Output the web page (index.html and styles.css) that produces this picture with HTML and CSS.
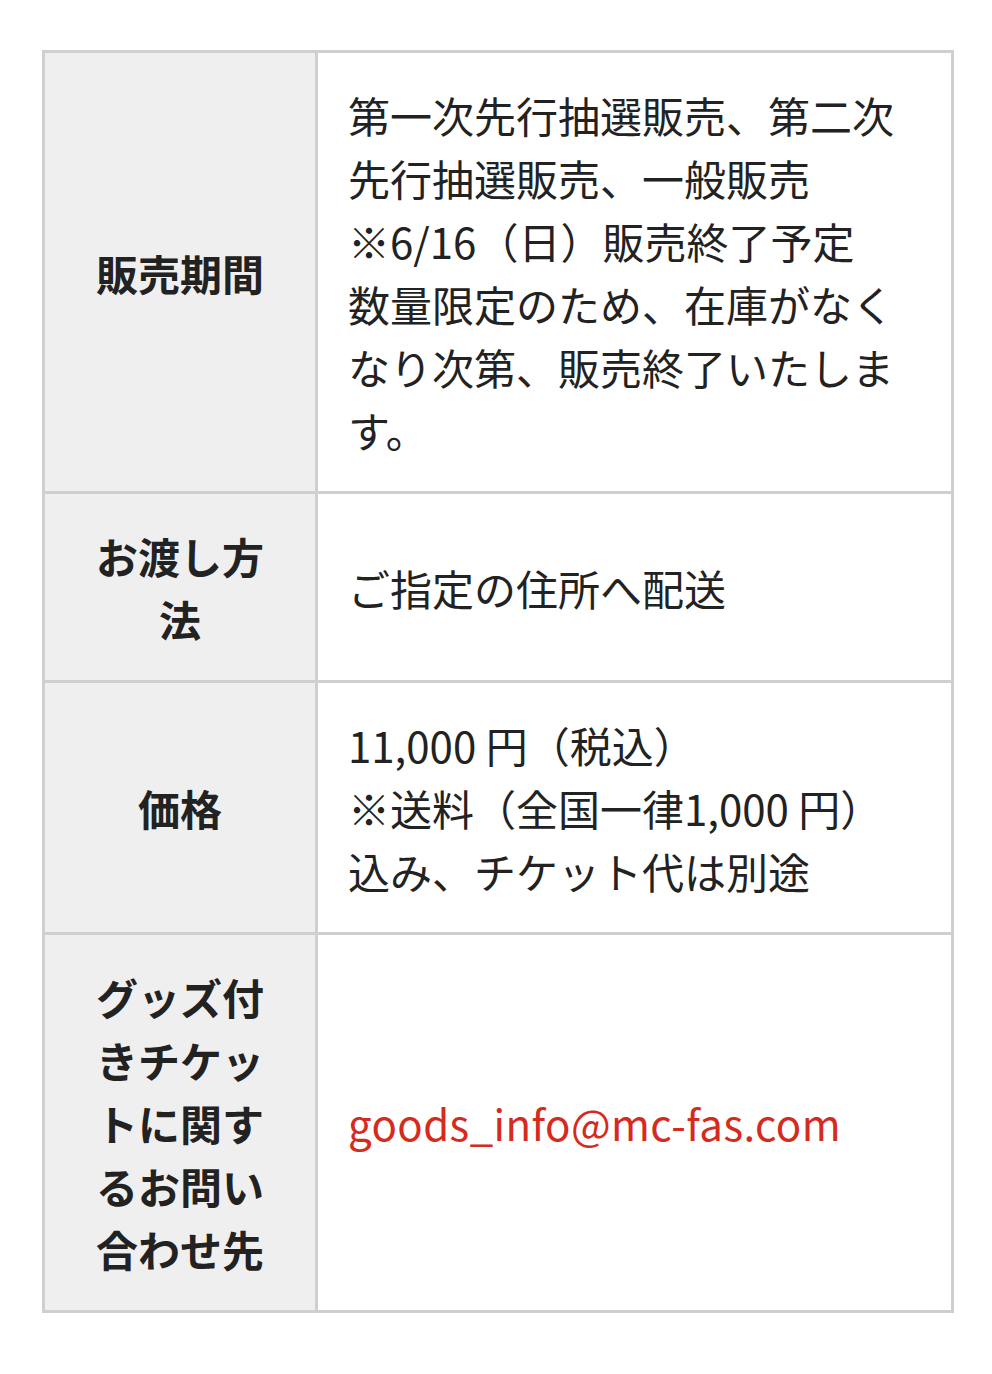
FILE: index.html
```html
<!DOCTYPE html>
<html lang="ja">
<head>
<meta charset="utf-8">
<link rel="stylesheet" href="styles.css">
</head>
<body>
<div class="wrap">
<table class="info">
<tr>
<th>販売期間</th>
<td>第一次先行抽選販売、第二次先行抽選販売、一般販売<br>※6/16（日）販売終了予定<br>数量限定のため、在庫がなくなり次第、販売終了いたします。</td>
</tr>
<tr>
<th>お渡し方法</th>
<td>ご指定の住所へ配送</td>
</tr>
<tr>
<th>価格</th>
<td>11,000 円（税込）<br>※送料（全国一律1,000 円）込み、チケット代は別途</td>
</tr>
<tr>
<th>グッズ付きチケットに関するお問い合わせ先</th>
<td><a class="mail" href="#">goods_info@mc-fas.com</a></td>
</tr>
</table>
</div>
</body>
</html>
```
FILE: styles.css
```css
html, body {
  margin: 0;
  padding: 0;
  background: #fff;
}
body {
  font-family: "Noto Sans CJK JP", "Noto Sans", sans-serif;
  color: #222;
}
.wrap {
  padding: 50px 0 0 42px;
}
.info {
  border-collapse: collapse;
  width: 912px;
  border: 3px solid #cfcfcf;
  font-size: 42px;
  line-height: 63px;
}
.info th,
.info td {
  border: 3px solid #cfcfcf;
  padding: 30px 31px;
  vertical-align: middle;
}
.info th {
  width: 208px;
  background: #efefef;
  font-weight: bold;
  text-align: center;
  color: #222;
}
.info td {
  padding-left: 30px;
  text-align: left;
  font-weight: normal;
}
.mail {
  color: #d52b1e;
  text-decoration: none;
  letter-spacing: 0.4px;
}
```
